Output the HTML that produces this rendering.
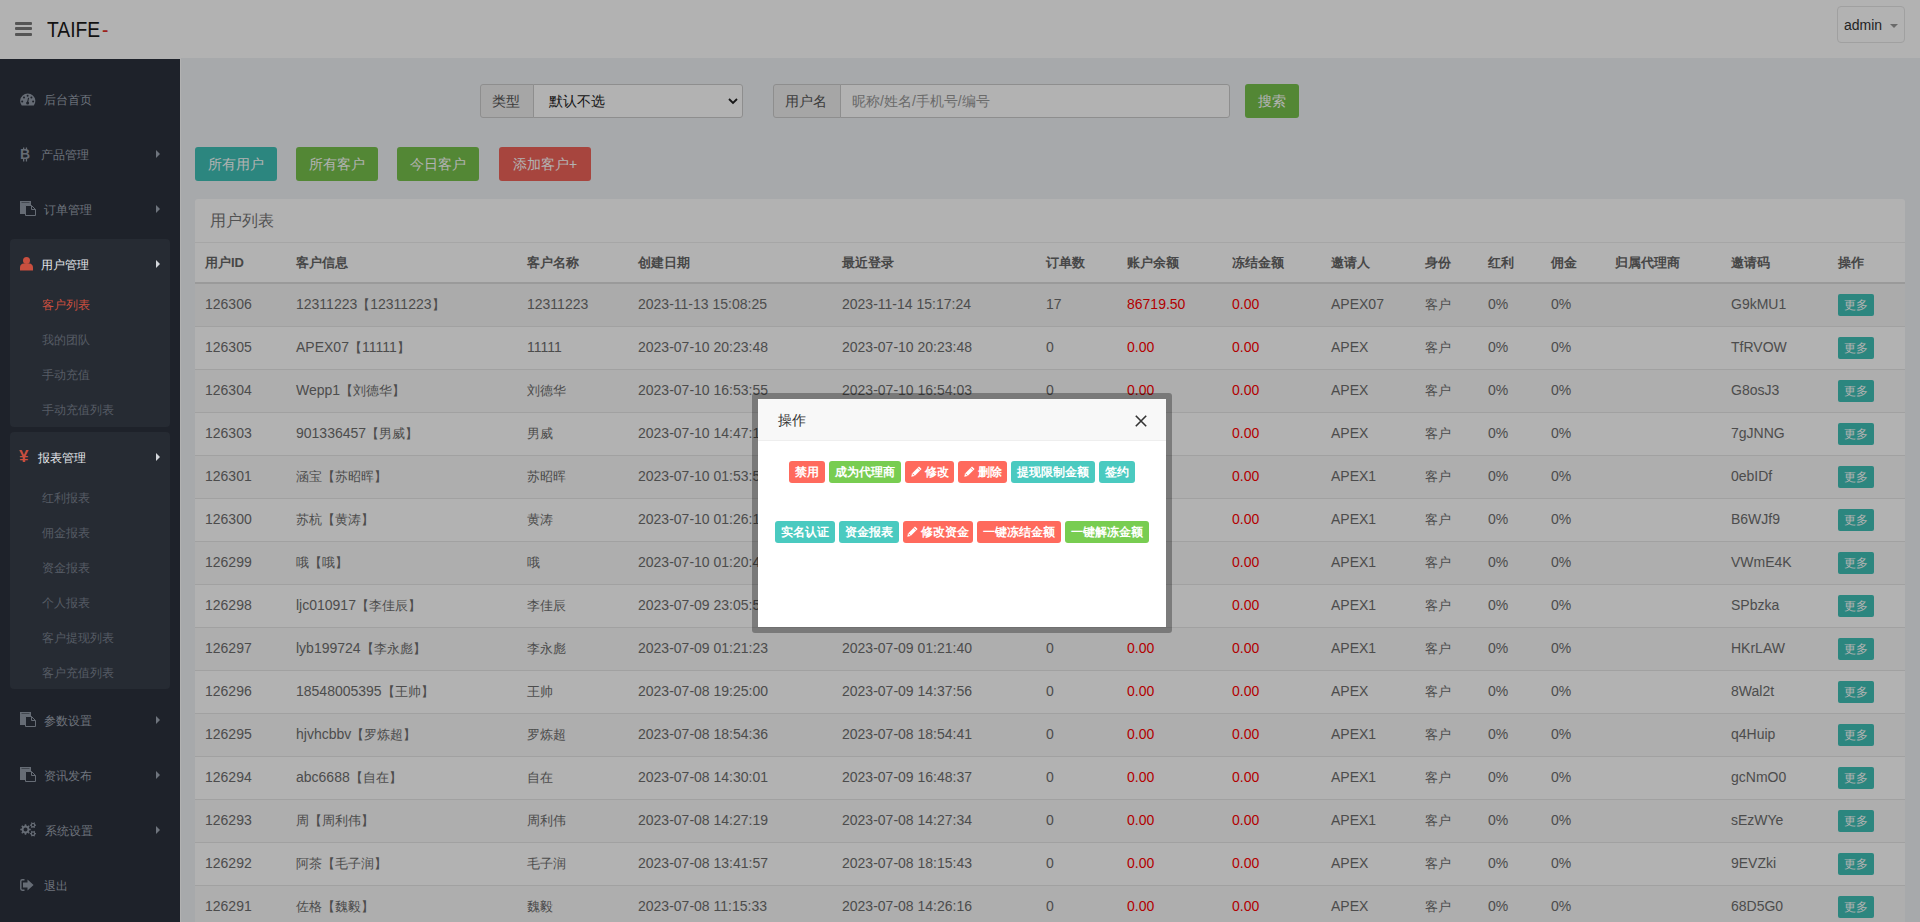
<!DOCTYPE html>
<html><head><meta charset="utf-8"><title>TAIFE</title>
<style>
*{box-sizing:border-box;margin:0;padding:0}
html,body{width:1920px;height:922px;overflow:hidden}
body{position:relative;background:#f0f2f5;font-family:"Liberation Sans",sans-serif;color:#666}
.t{position:absolute;white-space:nowrap;height:20px;line-height:20px;margin-top:-10px;font-size:13px}
#hdr{position:absolute;left:0;top:0;width:1920px;height:58px;background:#fff} #lstrip{position:absolute;left:0;top:58px;width:181px;height:864px;background:#fff}
#side{position:absolute;left:0;top:59px;width:180px;height:863px;background:#1e222a;z-index:5}
.mi{position:absolute;white-space:nowrap;height:20px;line-height:20px;margin-top:-9px;font-size:12px;color:#6e747d}
.mi.act{color:#e4e7eb;font-size:12px}
.ic{position:absolute;height:20px;margin-top:-10px;display:flex;align-items:center;color:#666c75}
.ic.red{color:#c94f3f}
.arr{position:absolute;left:156px;width:0;height:0;border-top:4px solid transparent;border-bottom:4px solid transparent;border-left:4px solid #6e747d}
.arr.wa{border-left-color:#d4d7dc}
.box{position:absolute;left:10px;width:160px;background:#262b33;border-radius:4px}
.sub{position:absolute;left:42px;white-space:nowrap;height:20px;line-height:20px;margin-top:-9px;font-size:12px;color:#565c65}
.sub.cur{color:#cc4f3f;font-size:12px}
.abtn{position:absolute;top:147px;height:34px;line-height:34px;color:#fff;font-size:14px;text-align:center;border-radius:3px}
.teal{background:#3fc1b6} .green{background:#77c24c} .redb{background:#f0635a}
#panel{position:absolute;left:195px;top:199px;width:1710px;height:740px;background:#fff;border-radius:3px}
.rl{position:absolute;left:195px;width:1710px;height:1px;background:#e7e7e7}
.th{font-weight:bold;color:#666;font-size:13px}
.td{color:#6e6e6e;font-size:14px;margin-top:-10px} .td .c{font-size:13px}
.red{color:#ff0000}
.more{position:absolute;left:1838px;width:36px;height:22px;line-height:22px;font-size:12px;color:#fff;background:#3fc1b6;border-radius:2px;text-align:center}
#ov{position:absolute;left:0;top:0;width:1920px;height:922px;background:rgba(0,0,0,0.3)}
#modal{position:absolute;left:752px;top:393px;width:420px;height:240px;border:6px solid rgba(0,0,0,0.3);border-radius:3px;background-clip:padding-box}
#mbody{position:absolute;left:0;top:0;width:408px;height:228px;background:#fff}
#mtitle{position:absolute;left:0;top:0;width:408px;height:42px;background:#f8f8f8;border-bottom:1px solid #eee}
.lb{position:absolute;height:22px;line-height:23px;font-size:12px;font-weight:bold;color:#fff;text-align:center;border-radius:3px;white-space:nowrap}
.lr{background:#ff6a5d} .lg{background:#78cd51} .lt{background:#4acac0}
</style></head><body>
<div id="hdr">
 <div style="position:absolute;left:15px;top:22px;width:17px;height:3px;background:#7a7a7a;border-radius:1px"></div>
 <div style="position:absolute;left:15px;top:27px;width:17px;height:3px;background:#7a7a7a;border-radius:1px"></div>
 <div style="position:absolute;left:15px;top:33px;width:17px;height:3px;background:#7a7a7a;border-radius:1px"></div>
 <div style="position:absolute;left:47px;top:16px;height:28px;line-height:28px;font-size:22px;color:#1a1a1a;white-space:nowrap;transform:scaleX(0.875);transform-origin:0 0">TAIFE<span style="color:#e0302a;margin-left:2px">-</span></div>
 <div style="position:absolute;left:1837px;top:6px;width:68px;height:37px;border:1px solid #e5e5e5;border-radius:4px"></div>
 <div style="position:absolute;left:1844px;top:15px;height:20px;line-height:20px;font-size:14px;color:#333">admin</div>
 <div style="position:absolute;left:1890px;top:24px;width:0;height:0;border-left:4px solid transparent;border-right:4px solid transparent;border-top:4px solid #999"></div>
</div>
<div id="lstrip"></div>
<div id="side">
<div style="position:absolute;left:0;top:-59px;width:180px;height:922px">
<div class="mi" style="left:44px;top:99px">后台首页</div><div class="ic" style="left:20px;top:99px"><svg width="16" height="13" viewBox="0 0 16 13"><path d="M1.7 12.6A7.6 7.6 0 1 1 13.8 12.6Z" fill="currentColor"/><g fill="#1e222a"><circle cx="7.6" cy="2.8" r="1"/><circle cx="4.0" cy="4.6" r="1"/><circle cx="11.4" cy="4.6" r="1"/><circle cx="2.2" cy="8.4" r="1"/><circle cx="13.1" cy="8.4" r="1"/><circle cx="7.6" cy="10.1" r="1.5"/></g><path d="M8.6 4.8L7.4 10" stroke="#1e222a" stroke-width="1.1"/></svg></div>
<div class="mi" style="left:41px;top:154px">产品管理</div><div class="ic" style="left:20px;top:154px"><svg width="12" height="15" viewBox="0 0 12 15"><text x="0" y="12" font-family="Liberation Sans" font-weight="bold" font-size="14" fill="currentColor">B</text><rect x="3" y="0.5" width="1.3" height="2.5" fill="currentColor"/><rect x="5.8" y="0.5" width="1.3" height="2.5" fill="currentColor"/><rect x="3" y="12" width="1.3" height="2.5" fill="currentColor"/><rect x="5.8" y="12" width="1.3" height="2.5" fill="currentColor"/></svg></div><div class="arr" style="top:150px"></div>
<div class="mi" style="left:44px;top:209px">订单管理</div><div class="ic" style="left:20px;top:209px"><svg width="16" height="16" viewBox="0 0 16 16" style="margin-top:-2px"><rect x="0" y="1" width="11" height="13" fill="currentColor"/><rect x="1.5" y="2" width="8" height="1" fill="#1e222a" opacity=".5"/><path d="M5.5 5.5H11.5L15.5 9.5V15.5H5.5Z" fill="#1e222a" stroke="currentColor" stroke-width="1"/><path d="M11.5 5.5V9.5H15.5" fill="none" stroke="currentColor" stroke-width="1"/></svg></div><div class="arr" style="top:205px"></div>
<div class="box" style="top:239px;height:188px"></div>
<div class="mi act" style="left:41px;top:264px">用户管理</div><div class="ic red" style="left:20px;top:264px"><svg width="13" height="14" viewBox="0 0 13 14"><circle cx="6.5" cy="3.5" r="3.5" fill="currentColor"/><path d="M0 13.5V10.5C0 8.3 1.6 6.6 3.6 6.6h5.8c2 0 3.6 1.7 3.6 3.9v3z" fill="currentColor"/></svg></div><div class="arr wa" style="top:260px"></div>
<div class="sub cur" style="top:304px">客户列表</div>
<div class="sub" style="top:339px">我的团队</div>
<div class="sub" style="top:374px">手动充值</div>
<div class="sub" style="top:409px">手动充值列表</div>
<div class="box" style="top:432px;height:257px"></div>
<div class="mi act" style="left:38px;top:457px">报表管理</div><div class="ic red" style="left:19px;top:457px"><span style="font:bold 17px 'Liberation Sans',sans-serif;line-height:17px;margin-top:-1px">&yen;</span></div><div class="arr wa" style="top:453px"></div>
<div class="sub" style="top:497px">红利报表</div>
<div class="sub" style="top:532px">佣金报表</div>
<div class="sub" style="top:567px">资金报表</div>
<div class="sub" style="top:602px">个人报表</div>
<div class="sub" style="top:637px">客户提现列表</div>
<div class="sub" style="top:672px">客户充值列表</div>
<div class="mi" style="left:44px;top:720px">参数设置</div><div class="ic" style="left:20px;top:720px"><svg width="16" height="16" viewBox="0 0 16 16" style="margin-top:-2px"><rect x="0" y="1" width="11" height="13" fill="currentColor"/><rect x="1.5" y="2" width="8" height="1" fill="#1e222a" opacity=".5"/><path d="M5.5 5.5H11.5L15.5 9.5V15.5H5.5Z" fill="#1e222a" stroke="currentColor" stroke-width="1"/><path d="M11.5 5.5V9.5H15.5" fill="none" stroke="currentColor" stroke-width="1"/></svg></div><div class="arr" style="top:716px"></div>
<div class="mi" style="left:44px;top:775px">资讯发布</div><div class="ic" style="left:20px;top:775px"><svg width="16" height="16" viewBox="0 0 16 16" style="margin-top:-2px"><rect x="0" y="1" width="11" height="13" fill="currentColor"/><rect x="1.5" y="2" width="8" height="1" fill="#1e222a" opacity=".5"/><path d="M5.5 5.5H11.5L15.5 9.5V15.5H5.5Z" fill="#1e222a" stroke="currentColor" stroke-width="1"/><path d="M11.5 5.5V9.5H15.5" fill="none" stroke="currentColor" stroke-width="1"/></svg></div><div class="arr" style="top:771px"></div>
<div class="mi" style="left:45px;top:830px">系统设置</div><div class="ic" style="left:20px;top:830px"><svg width="17" height="15" viewBox="0 0 17 15" style="margin-top:-2px"><path fill-rule="evenodd" d="M9.41 6.64 L10.75 6.77 L10.75 8.23 L9.41 8.36 L8.87 9.66 L9.73 10.70 L8.70 11.73 L7.66 10.87 L6.36 11.41 L6.23 12.75 L4.77 12.75 L4.64 11.41 L3.34 10.87 L2.30 11.73 L1.27 10.70 L2.13 9.66 L1.59 8.36 L0.25 8.23 L0.25 6.77 L1.59 6.64 L2.13 5.34 L1.27 4.30 L2.30 3.27 L3.34 4.13 L4.64 3.59 L4.77 2.25 L6.23 2.25 L6.36 3.59 L7.66 4.13 L8.70 3.27 L9.73 4.30 L8.87 5.34ZM7.50 7.50A2.0 2.0 0 1 0 3.50 7.50A2.0 2.0 0 1 0 7.50 7.50ZM15.21 2.55 L16.05 2.64 L16.05 3.76 L15.21 3.85 L14.67 4.78 L15.01 5.56 L14.03 6.12 L13.54 5.44 L12.46 5.44 L11.97 6.12 L10.99 5.56 L11.33 4.78 L10.79 3.85 L9.95 3.76 L9.95 2.64 L10.79 2.55 L11.33 1.62 L10.99 0.84 L11.97 0.28 L12.46 0.96 L13.54 0.96 L14.03 0.28 L15.01 0.84 L14.67 1.62ZM14.10 3.20A1.1 1.1 0 1 0 11.90 3.20A1.1 1.1 0 1 0 14.10 3.20ZM15.21 11.05 L16.05 11.14 L16.05 12.26 L15.21 12.35 L14.67 13.28 L15.01 14.06 L14.03 14.62 L13.54 13.94 L12.46 13.94 L11.97 14.62 L10.99 14.06 L11.33 13.28 L10.79 12.35 L9.95 12.26 L9.95 11.14 L10.79 11.05 L11.33 10.12 L10.99 9.34 L11.97 8.78 L12.46 9.46 L13.54 9.46 L14.03 8.78 L15.01 9.34 L14.67 10.12ZM14.10 11.70A1.1 1.1 0 1 0 11.90 11.70A1.1 1.1 0 1 0 14.10 11.70Z" fill="currentColor"/></svg></div><div class="arr" style="top:826px"></div>
<div class="mi" style="left:44px;top:885px">退出</div><div class="ic" style="left:20px;top:885px"><svg width="14" height="12" viewBox="0 0 14 12"><path d="M4.5 0.8H2.2A1.4 1.4 0 0 0 0.8 2.2v7.6a1.4 1.4 0 0 0 1.4 1.4h2.3" fill="none" stroke="currentColor" stroke-width="1.4"/><path d="M3 3.6h4.5V0.4L13.6 6 7.5 11.6V8.4H3z" fill="currentColor"/></svg></div>
</div>
</div>
<!-- search form -->
<div style="position:absolute;left:480px;top:84px;width:54px;height:34px;background:#eee;border:1px solid #ccc;border-radius:3px 0 0 3px"></div>
<div class="t" style="left:492px;top:101px;font-size:14px;color:#555">类型</div>
<div style="position:absolute;left:533px;top:84px;width:210px;height:34px;background:#fff;border:1px solid #ccc;border-radius:0 3px 3px 0"></div>
<div class="t" style="left:549px;top:101px;font-size:14px;color:#222">默认不选</div>
<svg style="position:absolute;left:728px;top:97px" width="10" height="8" viewBox="0 0 10 8"><path d="M1 2l4 4 4-4" fill="none" stroke="#222" stroke-width="1.8"/></svg>
<div style="position:absolute;left:773px;top:84px;width:68px;height:34px;background:#eee;border:1px solid #ccc;border-radius:3px 0 0 3px"></div>
<div class="t" style="left:785px;top:101px;font-size:14px;color:#555">用户名</div>
<div style="position:absolute;left:840px;top:84px;width:390px;height:34px;background:#fff;border:1px solid #ccc;border-radius:0 3px 3px 0"></div>
<div class="t" style="left:852px;top:101px;font-size:14px;color:#999">昵称/姓名/手机号/编号</div>
<div class="abtn green" style="left:1245px;top:84px;width:54px;height:34px;line-height:34px">搜索</div>
<!-- action buttons -->
<div class="abtn teal" style="left:195px;width:82px">所有用户</div>
<div class="abtn green" style="left:296px;width:82px">所有客户</div>
<div class="abtn green" style="left:397px;width:82px">今日客户</div>
<div class="abtn redb" style="left:499px;width:92px">添加客户+</div>
<!-- panel -->
<div id="panel"></div>
<div class="t" style="left:210px;top:221px;font-size:16px;color:#777">用户列表</div>
<div class="rl" style="top:242px;background:#eee"></div>
<div style="position:absolute;left:195px;top:284px;width:1710px;height:42px;background:#f5f5f5"></div>
<div class="rl" style="top:282px;height:2px;background:#ddd"></div>
<div style="position:absolute;left:195px;top:370px;width:1710px;height:42px;background:#f9f9f9"></div>
<div style="position:absolute;left:195px;top:456px;width:1710px;height:42px;background:#f9f9f9"></div>
<div style="position:absolute;left:195px;top:542px;width:1710px;height:42px;background:#f9f9f9"></div>
<div style="position:absolute;left:195px;top:628px;width:1710px;height:42px;background:#f9f9f9"></div>
<div style="position:absolute;left:195px;top:714px;width:1710px;height:42px;background:#f9f9f9"></div>
<div style="position:absolute;left:195px;top:800px;width:1710px;height:42px;background:#f9f9f9"></div>
<div style="position:absolute;left:195px;top:886px;width:1710px;height:42px;background:#f9f9f9"></div>
<div class="rl" style="top:326px"></div>
<div class="rl" style="top:369px"></div>
<div class="rl" style="top:412px"></div>
<div class="rl" style="top:455px"></div>
<div class="rl" style="top:498px"></div>
<div class="rl" style="top:541px"></div>
<div class="rl" style="top:584px"></div>
<div class="rl" style="top:627px"></div>
<div class="rl" style="top:670px"></div>
<div class="rl" style="top:713px"></div>
<div class="rl" style="top:756px"></div>
<div class="rl" style="top:799px"></div>
<div class="rl" style="top:842px"></div>
<div class="rl" style="top:885px"></div>
<div class="t th" style="left:205px;top:263px;"><span class="c">用户</span>ID</div>
<div class="t th" style="left:296px;top:263px;"><span class="c">客户信息</span></div>
<div class="t th" style="left:527px;top:263px;"><span class="c">客户名称</span></div>
<div class="t th" style="left:638px;top:263px;"><span class="c">创建日期</span></div>
<div class="t th" style="left:842px;top:263px;"><span class="c">最近登录</span></div>
<div class="t th" style="left:1046px;top:263px;"><span class="c">订单数</span></div>
<div class="t th" style="left:1127px;top:263px;"><span class="c">账户余额</span></div>
<div class="t th" style="left:1232px;top:263px;"><span class="c">冻结金额</span></div>
<div class="t th" style="left:1331px;top:263px;"><span class="c">邀请人</span></div>
<div class="t th" style="left:1425px;top:263px;"><span class="c">身份</span></div>
<div class="t th" style="left:1488px;top:263px;"><span class="c">红利</span></div>
<div class="t th" style="left:1551px;top:263px;"><span class="c">佣金</span></div>
<div class="t th" style="left:1615px;top:263px;"><span class="c">归属代理商</span></div>
<div class="t th" style="left:1731px;top:263px;"><span class="c">邀请码</span></div>
<div class="t th" style="left:1838px;top:263px;"><span class="c">操作</span></div>
<div class="t td" style="left:205px;top:304px;">126306</div>
<div class="t td" style="left:296px;top:304px;">12311223<span class="c">【</span>12311223<span class="c">】</span></div>
<div class="t td" style="left:527px;top:304px;">12311223</div>
<div class="t td" style="left:638px;top:304px;">2023-11-13 15:08:25</div>
<div class="t td" style="left:842px;top:304px;">2023-11-14 15:17:24</div>
<div class="t td" style="left:1046px;top:304px;">17</div>
<div class="t td red" style="left:1127px;top:304px;">86719.50</div>
<div class="t td red" style="left:1232px;top:304px;">0.00</div>
<div class="t td" style="left:1331px;top:304px;">APEX07</div>
<div class="t td" style="left:1425px;top:304px;"><span class="c">客户</span></div>
<div class="t td" style="left:1488px;top:304px;">0%</div>
<div class="t td" style="left:1551px;top:304px;">0%</div>
<div class="t td" style="left:1731px;top:304px;">G9kMU1</div>
<div class="more" style="top:294px">更多</div>
<div class="t td" style="left:205px;top:347px;">126305</div>
<div class="t td" style="left:296px;top:347px;">APEX07<span class="c">【</span>11111<span class="c">】</span></div>
<div class="t td" style="left:527px;top:347px;">11111</div>
<div class="t td" style="left:638px;top:347px;">2023-07-10 20:23:48</div>
<div class="t td" style="left:842px;top:347px;">2023-07-10 20:23:48</div>
<div class="t td" style="left:1046px;top:347px;">0</div>
<div class="t td red" style="left:1127px;top:347px;">0.00</div>
<div class="t td red" style="left:1232px;top:347px;">0.00</div>
<div class="t td" style="left:1331px;top:347px;">APEX</div>
<div class="t td" style="left:1425px;top:347px;"><span class="c">客户</span></div>
<div class="t td" style="left:1488px;top:347px;">0%</div>
<div class="t td" style="left:1551px;top:347px;">0%</div>
<div class="t td" style="left:1731px;top:347px;">TfRVOW</div>
<div class="more" style="top:337px">更多</div>
<div class="t td" style="left:205px;top:390px;">126304</div>
<div class="t td" style="left:296px;top:390px;">Wepp1<span class="c">【刘德华】</span></div>
<div class="t td" style="left:527px;top:390px;"><span class="c">刘德华</span></div>
<div class="t td" style="left:638px;top:390px;">2023-07-10 16:53:55</div>
<div class="t td" style="left:842px;top:390px;">2023-07-10 16:54:03</div>
<div class="t td" style="left:1046px;top:390px;">0</div>
<div class="t td red" style="left:1127px;top:390px;">0.00</div>
<div class="t td red" style="left:1232px;top:390px;">0.00</div>
<div class="t td" style="left:1331px;top:390px;">APEX</div>
<div class="t td" style="left:1425px;top:390px;"><span class="c">客户</span></div>
<div class="t td" style="left:1488px;top:390px;">0%</div>
<div class="t td" style="left:1551px;top:390px;">0%</div>
<div class="t td" style="left:1731px;top:390px;">G8osJ3</div>
<div class="more" style="top:380px">更多</div>
<div class="t td" style="left:205px;top:433px;">126303</div>
<div class="t td" style="left:296px;top:433px;">901336457<span class="c">【男威】</span></div>
<div class="t td" style="left:527px;top:433px;"><span class="c">男威</span></div>
<div class="t td" style="left:638px;top:433px;">2023-07-10 14:47:19</div>
<div class="t td" style="left:842px;top:433px;">2023-07-10 14:47:25</div>
<div class="t td" style="left:1046px;top:433px;">0</div>
<div class="t td red" style="left:1127px;top:433px;">0.00</div>
<div class="t td red" style="left:1232px;top:433px;">0.00</div>
<div class="t td" style="left:1331px;top:433px;">APEX</div>
<div class="t td" style="left:1425px;top:433px;"><span class="c">客户</span></div>
<div class="t td" style="left:1488px;top:433px;">0%</div>
<div class="t td" style="left:1551px;top:433px;">0%</div>
<div class="t td" style="left:1731px;top:433px;">7gJNNG</div>
<div class="more" style="top:423px">更多</div>
<div class="t td" style="left:205px;top:476px;">126301</div>
<div class="t td" style="left:296px;top:476px;"><span class="c">涵宝【苏昭晖】</span></div>
<div class="t td" style="left:527px;top:476px;"><span class="c">苏昭晖</span></div>
<div class="t td" style="left:638px;top:476px;">2023-07-10 01:53:52</div>
<div class="t td" style="left:842px;top:476px;">2023-07-10 01:54:10</div>
<div class="t td" style="left:1046px;top:476px;">0</div>
<div class="t td red" style="left:1127px;top:476px;">0.00</div>
<div class="t td red" style="left:1232px;top:476px;">0.00</div>
<div class="t td" style="left:1331px;top:476px;">APEX1</div>
<div class="t td" style="left:1425px;top:476px;"><span class="c">客户</span></div>
<div class="t td" style="left:1488px;top:476px;">0%</div>
<div class="t td" style="left:1551px;top:476px;">0%</div>
<div class="t td" style="left:1731px;top:476px;">0ebIDf</div>
<div class="more" style="top:466px">更多</div>
<div class="t td" style="left:205px;top:519px;">126300</div>
<div class="t td" style="left:296px;top:519px;"><span class="c">苏杭【黄涛】</span></div>
<div class="t td" style="left:527px;top:519px;"><span class="c">黄涛</span></div>
<div class="t td" style="left:638px;top:519px;">2023-07-10 01:26:15</div>
<div class="t td" style="left:842px;top:519px;">2023-07-10 01:26:30</div>
<div class="t td" style="left:1046px;top:519px;">0</div>
<div class="t td red" style="left:1127px;top:519px;">0.00</div>
<div class="t td red" style="left:1232px;top:519px;">0.00</div>
<div class="t td" style="left:1331px;top:519px;">APEX1</div>
<div class="t td" style="left:1425px;top:519px;"><span class="c">客户</span></div>
<div class="t td" style="left:1488px;top:519px;">0%</div>
<div class="t td" style="left:1551px;top:519px;">0%</div>
<div class="t td" style="left:1731px;top:519px;">B6WJf9</div>
<div class="more" style="top:509px">更多</div>
<div class="t td" style="left:205px;top:562px;">126299</div>
<div class="t td" style="left:296px;top:562px;"><span class="c">哦【哦】</span></div>
<div class="t td" style="left:527px;top:562px;"><span class="c">哦</span></div>
<div class="t td" style="left:638px;top:562px;">2023-07-10 01:20:44</div>
<div class="t td" style="left:842px;top:562px;">2023-07-10 01:20:58</div>
<div class="t td" style="left:1046px;top:562px;">0</div>
<div class="t td red" style="left:1127px;top:562px;">0.00</div>
<div class="t td red" style="left:1232px;top:562px;">0.00</div>
<div class="t td" style="left:1331px;top:562px;">APEX1</div>
<div class="t td" style="left:1425px;top:562px;"><span class="c">客户</span></div>
<div class="t td" style="left:1488px;top:562px;">0%</div>
<div class="t td" style="left:1551px;top:562px;">0%</div>
<div class="t td" style="left:1731px;top:562px;">VWmE4K</div>
<div class="more" style="top:552px">更多</div>
<div class="t td" style="left:205px;top:605px;">126298</div>
<div class="t td" style="left:296px;top:605px;">ljc010917<span class="c">【李佳辰】</span></div>
<div class="t td" style="left:527px;top:605px;"><span class="c">李佳辰</span></div>
<div class="t td" style="left:638px;top:605px;">2023-07-09 23:05:51</div>
<div class="t td" style="left:842px;top:605px;">2023-07-09 23:06:02</div>
<div class="t td" style="left:1046px;top:605px;">0</div>
<div class="t td red" style="left:1127px;top:605px;">0.00</div>
<div class="t td red" style="left:1232px;top:605px;">0.00</div>
<div class="t td" style="left:1331px;top:605px;">APEX1</div>
<div class="t td" style="left:1425px;top:605px;"><span class="c">客户</span></div>
<div class="t td" style="left:1488px;top:605px;">0%</div>
<div class="t td" style="left:1551px;top:605px;">0%</div>
<div class="t td" style="left:1731px;top:605px;">SPbzka</div>
<div class="more" style="top:595px">更多</div>
<div class="t td" style="left:205px;top:648px;">126297</div>
<div class="t td" style="left:296px;top:648px;">lyb199724<span class="c">【李永彪】</span></div>
<div class="t td" style="left:527px;top:648px;"><span class="c">李永彪</span></div>
<div class="t td" style="left:638px;top:648px;">2023-07-09 01:21:23</div>
<div class="t td" style="left:842px;top:648px;">2023-07-09 01:21:40</div>
<div class="t td" style="left:1046px;top:648px;">0</div>
<div class="t td red" style="left:1127px;top:648px;">0.00</div>
<div class="t td red" style="left:1232px;top:648px;">0.00</div>
<div class="t td" style="left:1331px;top:648px;">APEX1</div>
<div class="t td" style="left:1425px;top:648px;"><span class="c">客户</span></div>
<div class="t td" style="left:1488px;top:648px;">0%</div>
<div class="t td" style="left:1551px;top:648px;">0%</div>
<div class="t td" style="left:1731px;top:648px;">HKrLAW</div>
<div class="more" style="top:638px">更多</div>
<div class="t td" style="left:205px;top:691px;">126296</div>
<div class="t td" style="left:296px;top:691px;">18548005395<span class="c">【王帅】</span></div>
<div class="t td" style="left:527px;top:691px;"><span class="c">王帅</span></div>
<div class="t td" style="left:638px;top:691px;">2023-07-08 19:25:00</div>
<div class="t td" style="left:842px;top:691px;">2023-07-09 14:37:56</div>
<div class="t td" style="left:1046px;top:691px;">0</div>
<div class="t td red" style="left:1127px;top:691px;">0.00</div>
<div class="t td red" style="left:1232px;top:691px;">0.00</div>
<div class="t td" style="left:1331px;top:691px;">APEX</div>
<div class="t td" style="left:1425px;top:691px;"><span class="c">客户</span></div>
<div class="t td" style="left:1488px;top:691px;">0%</div>
<div class="t td" style="left:1551px;top:691px;">0%</div>
<div class="t td" style="left:1731px;top:691px;">8Wal2t</div>
<div class="more" style="top:681px">更多</div>
<div class="t td" style="left:205px;top:734px;">126295</div>
<div class="t td" style="left:296px;top:734px;">hjvhcbbv<span class="c">【罗炼超】</span></div>
<div class="t td" style="left:527px;top:734px;"><span class="c">罗炼超</span></div>
<div class="t td" style="left:638px;top:734px;">2023-07-08 18:54:36</div>
<div class="t td" style="left:842px;top:734px;">2023-07-08 18:54:41</div>
<div class="t td" style="left:1046px;top:734px;">0</div>
<div class="t td red" style="left:1127px;top:734px;">0.00</div>
<div class="t td red" style="left:1232px;top:734px;">0.00</div>
<div class="t td" style="left:1331px;top:734px;">APEX1</div>
<div class="t td" style="left:1425px;top:734px;"><span class="c">客户</span></div>
<div class="t td" style="left:1488px;top:734px;">0%</div>
<div class="t td" style="left:1551px;top:734px;">0%</div>
<div class="t td" style="left:1731px;top:734px;">q4Huip</div>
<div class="more" style="top:724px">更多</div>
<div class="t td" style="left:205px;top:777px;">126294</div>
<div class="t td" style="left:296px;top:777px;">abc6688<span class="c">【自在】</span></div>
<div class="t td" style="left:527px;top:777px;"><span class="c">自在</span></div>
<div class="t td" style="left:638px;top:777px;">2023-07-08 14:30:01</div>
<div class="t td" style="left:842px;top:777px;">2023-07-09 16:48:37</div>
<div class="t td" style="left:1046px;top:777px;">0</div>
<div class="t td red" style="left:1127px;top:777px;">0.00</div>
<div class="t td red" style="left:1232px;top:777px;">0.00</div>
<div class="t td" style="left:1331px;top:777px;">APEX1</div>
<div class="t td" style="left:1425px;top:777px;"><span class="c">客户</span></div>
<div class="t td" style="left:1488px;top:777px;">0%</div>
<div class="t td" style="left:1551px;top:777px;">0%</div>
<div class="t td" style="left:1731px;top:777px;">gcNmO0</div>
<div class="more" style="top:767px">更多</div>
<div class="t td" style="left:205px;top:820px;">126293</div>
<div class="t td" style="left:296px;top:820px;"><span class="c">周【周利伟】</span></div>
<div class="t td" style="left:527px;top:820px;"><span class="c">周利伟</span></div>
<div class="t td" style="left:638px;top:820px;">2023-07-08 14:27:19</div>
<div class="t td" style="left:842px;top:820px;">2023-07-08 14:27:34</div>
<div class="t td" style="left:1046px;top:820px;">0</div>
<div class="t td red" style="left:1127px;top:820px;">0.00</div>
<div class="t td red" style="left:1232px;top:820px;">0.00</div>
<div class="t td" style="left:1331px;top:820px;">APEX1</div>
<div class="t td" style="left:1425px;top:820px;"><span class="c">客户</span></div>
<div class="t td" style="left:1488px;top:820px;">0%</div>
<div class="t td" style="left:1551px;top:820px;">0%</div>
<div class="t td" style="left:1731px;top:820px;">sEzWYe</div>
<div class="more" style="top:810px">更多</div>
<div class="t td" style="left:205px;top:863px;">126292</div>
<div class="t td" style="left:296px;top:863px;"><span class="c">阿茶【毛子润】</span></div>
<div class="t td" style="left:527px;top:863px;"><span class="c">毛子润</span></div>
<div class="t td" style="left:638px;top:863px;">2023-07-08 13:41:57</div>
<div class="t td" style="left:842px;top:863px;">2023-07-08 18:15:43</div>
<div class="t td" style="left:1046px;top:863px;">0</div>
<div class="t td red" style="left:1127px;top:863px;">0.00</div>
<div class="t td red" style="left:1232px;top:863px;">0.00</div>
<div class="t td" style="left:1331px;top:863px;">APEX</div>
<div class="t td" style="left:1425px;top:863px;"><span class="c">客户</span></div>
<div class="t td" style="left:1488px;top:863px;">0%</div>
<div class="t td" style="left:1551px;top:863px;">0%</div>
<div class="t td" style="left:1731px;top:863px;">9EVZki</div>
<div class="more" style="top:853px">更多</div>
<div class="t td" style="left:205px;top:906px;">126291</div>
<div class="t td" style="left:296px;top:906px;"><span class="c">佐格【魏毅】</span></div>
<div class="t td" style="left:527px;top:906px;"><span class="c">魏毅</span></div>
<div class="t td" style="left:638px;top:906px;">2023-07-08 11:15:33</div>
<div class="t td" style="left:842px;top:906px;">2023-07-08 14:26:16</div>
<div class="t td" style="left:1046px;top:906px;">0</div>
<div class="t td red" style="left:1127px;top:906px;">0.00</div>
<div class="t td red" style="left:1232px;top:906px;">0.00</div>
<div class="t td" style="left:1331px;top:906px;">APEX</div>
<div class="t td" style="left:1425px;top:906px;"><span class="c">客户</span></div>
<div class="t td" style="left:1488px;top:906px;">0%</div>
<div class="t td" style="left:1551px;top:906px;">0%</div>
<div class="t td" style="left:1731px;top:906px;">68D5G0</div>
<div class="more" style="top:896px">更多</div>
<div id="ov"></div>
<div id="modal"><div id="mbody">
 <div id="mtitle"></div>
 <div class="t" style="left:20px;top:21px;font-size:14px;color:#333">操作</div>
 <svg style="position:absolute;left:377px;top:16px" width="12" height="12" viewBox="0 0 12 12"><path d="M.8.8l10.4 10.4M11.2.8L.8 11.2" stroke="#333" stroke-width="1.6"/></svg>
 <div class="lb lr" style="left:31px;top:62px;width:36px">禁用</div>
 <div class="lb lg" style="left:71px;top:62px;width:72px">成为代理商</div>
 <div class="lb lr" style="left:147px;top:62px;width:49px"><svg width="11" height="11" viewBox="0 0 11 11" style="margin-right:3px;vertical-align:-1px"><path d="M8 .4l2.6 2.6-7 7L.3 10.7l.7-3.3z" fill="#fff"/><path d="M1.4 7.6l2 2" stroke="#ff6a5d" stroke-width=".9"/><path d="M6.6 1.8l2.6 2.6" stroke="#ff6a5d" stroke-width=".7"/></svg>修改</div>
 <div class="lb lr" style="left:200px;top:62px;width:49px"><svg width="11" height="11" viewBox="0 0 11 11" style="margin-right:3px;vertical-align:-1px"><path d="M8 .4l2.6 2.6-7 7L.3 10.7l.7-3.3z" fill="#fff"/><path d="M1.4 7.6l2 2" stroke="#ff6a5d" stroke-width=".9"/><path d="M6.6 1.8l2.6 2.6" stroke="#ff6a5d" stroke-width=".7"/></svg>删除</div>
 <div class="lb lt" style="left:253px;top:62px;width:84px">提现限制金额</div>
 <div class="lb lt" style="left:341px;top:62px;width:36px">签约</div>
 <div class="lb lt" style="left:17px;top:122px;width:60px">实名认证</div>
 <div class="lb lt" style="left:81px;top:122px;width:60px">资金报表</div>
 <div class="lb lr" style="left:145px;top:122px;width:70px"><svg width="11" height="11" viewBox="0 0 11 11" style="margin-right:3px;vertical-align:-1px"><path d="M8 .4l2.6 2.6-7 7L.3 10.7l.7-3.3z" fill="#fff"/><path d="M1.4 7.6l2 2" stroke="#ff6a5d" stroke-width=".9"/><path d="M6.6 1.8l2.6 2.6" stroke="#ff6a5d" stroke-width=".7"/></svg>修改资金</div>
 <div class="lb lr" style="left:219px;top:122px;width:84px">一键冻结金额</div>
 <div class="lb lg" style="left:307px;top:122px;width:84px">一键解冻金额</div>
</div></div>
</body></html>
